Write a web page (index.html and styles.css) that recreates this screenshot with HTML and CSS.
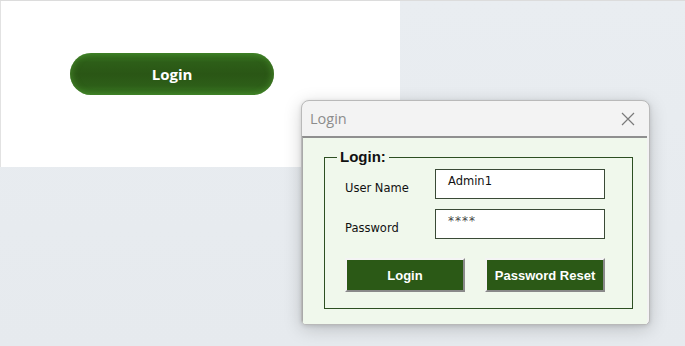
FILE: index.html
```html
<!DOCTYPE html>
<html>
<head>
<meta charset="utf-8">
<link rel="stylesheet" href="styles.css">
</head>
<body>
<div class="desktop">
  <div class="panel">
    <button class="pill">Login</button>
  </div>
  <div class="dialog">
    <div class="titlebar">
      <span class="title">Login</span>
      <svg class="close" width="14" height="14" viewBox="0 0 14 14"><path d="M1 1L13 13M13 1L1 13" stroke="#7a7a7a" stroke-width="1.2" fill="none"/></svg>
    </div>
    <div class="body">
      <fieldset class="group">
        <legend>Login:</legend>
        <div class="row">
          <span class="label">User Name</span>
          <div class="field">Admin1</div>
        </div>
        <div class="row">
          <span class="label">Password</span>
          <div class="field pw">****</div>
        </div>
        <div class="buttons">
          <button class="btn">Login</button>
          <button class="btn">Password Reset</button>
        </div>
      </fieldset>
    </div>
  </div>
</div>
</body>
</html>
```

FILE: styles.css
```css
html, body {
  margin: 0;
  padding: 0;
}
body {
  width: 685px;
  height: 346px;
  overflow: hidden;
  background: linear-gradient(180deg, #e9edf1 0%, #e6eaee 100%);
}
.desktop {
  position: relative;
  width: 685px;
  height: 346px;
  border-top: 1px solid #dcdcdc;
  box-sizing: border-box;
}
.panel {
  width: 400px;
  height: 166px;
  background: #ffffff;
  border-left: 1px solid #e2e2e2;
  box-sizing: border-box;
  padding: 52px 0 0 69px;
}
.pill {
  display: block;
  width: 204px;
  height: 42px;
  border: none;
  border-radius: 21px;
  background: linear-gradient(180deg, #3a7a23 0%, #2d5e18 22%, #2a5615 50%, #2d5e18 78%, #3b7b24 100%);
  box-shadow: inset 4px 0 6px -2px rgba(80,150,50,0.6), inset -4px 0 6px -2px rgba(80,150,50,0.6);
  color: #ffffff;
  font-family: "Open Sans", "Liberation Sans", sans-serif;
  font-weight: 700;
  font-size: 15px;
  padding: 0;
  cursor: pointer;
}
.dialog {
  position: absolute;
  left: 301px;
  top: 99px;
  width: 349px;
  height: 225px;
  box-sizing: border-box;
  border: 1px solid #b9b9b9;
  border-radius: 8px 8px 5px 5px;
  background: #f3f3f3;
  box-shadow: 0 4px 18px rgba(0,0,0,0.18), 0 1px 4px rgba(0,0,0,0.12);
  display: flex;
  flex-direction: column;
  overflow: hidden;
}
.titlebar {
  height: 35px;
  display: flex;
  align-items: center;
  justify-content: space-between;
  padding: 0 14px 0 8px;
  flex: none;
}
.title {
  font-family: "Open Sans", "Noto Sans", sans-serif;
  font-size: 14.5px;
  color: #8c8c8c;
}
.close {
  display: block;
}
.body {
  flex: 1;
  background: #f0f8ec;
  border-top: 2px solid #8f8f8f;
  border-left: 1px solid #a9a9a9;
  margin-right: 2px;
  padding: 13px 0 0 21px;
}
.group {
  margin: 0;
  width: 309px;
  height: 159px;
  box-sizing: border-box;
  border: 1px solid #2d4f22;
  padding: 0 0 0 20px;
  position: relative;
  top: -1px;
}
.group legend {
  font-family: "Liberation Sans", Arial, sans-serif;
  font-weight: 700;
  font-size: 15px;
  color: #111111;
  padding: 0 3px;
  margin-left: -8px;
  line-height: 14px;
}
.row {
  display: flex;
  align-items: center;
  height: 30px;
  margin-top: 10px;
}
.row:first-of-type {
  margin-top: 5px;
}
.label {
  width: 90px;
  font-family: "DejaVu Sans", sans-serif;
  font-size: 11.5px;
  color: #111111;
  padding-top: 8px;
}
.field {
  width: 170px;
  height: 30px;
  box-sizing: border-box;
  border: 1px solid #3a4a36;
  background: #ffffff;
  font-family: "DejaVu Sans", sans-serif;
  font-size: 11.5px;
  color: #111111;
  padding: 4px 0 0 12px;
}
.field.pw {
  color: #444444;
  letter-spacing: 1px;
  font-size: 12px;
}
.buttons {
  display: flex;
  gap: 20px;
  margin-top: 19px;
}
.btn {
  width: 120px;
  height: 34px;
  box-sizing: border-box;
  border-style: solid;
  border-width: 2px;
  border-color: #f4f4f4 #8a8a8a #8a8a8a #f4f4f4;
  background: #2b5916;
  color: #ffffff;
  font-family: "Liberation Sans", Arial, sans-serif;
  font-weight: 700;
  font-size: 13px;
  padding: 0;
}
```
